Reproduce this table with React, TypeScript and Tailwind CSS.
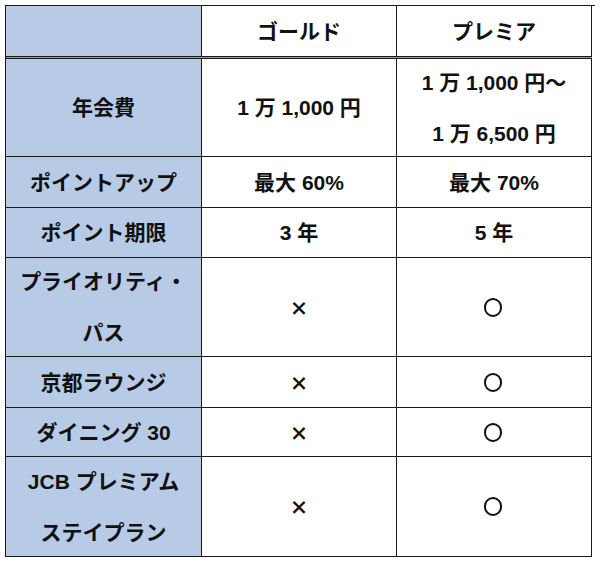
const font = { fontFamily: '"Liberation Sans", "Noto Sans CJK JP", sans-serif' }
const cjk = { fontFamily: '"Noto Sans CJK JP", sans-serif' }

type Row = { label: string[]; gold: string[]; premia: string[]; h: string; mark?: boolean }

const rows: Row[] = [
  { label: ['年会費'], gold: ['1 万 1,000 円'], premia: ['1 万 1,000 円～', '1 万 6,500 円'], h: 'h-[99px]' },
  { label: ['ポイントアップ'], gold: ['最大 60%'], premia: ['最大 70%'], h: 'h-[51px]' },
  { label: ['ポイント期限'], gold: ['3 年'], premia: ['5 年'], h: 'h-[50px]' },
  { label: ['プライオリティ・', 'パス'], gold: ['×'], premia: ['○'], h: 'h-[99px]', mark: true },
  { label: ['京都ラウンジ'], gold: ['×'], premia: ['○'], h: 'h-[51px]', mark: true },
  { label: ['ダイニング 30'], gold: ['×'], premia: ['○'], h: 'h-[49px]', mark: true },
  { label: ['JCB プレミアム', 'ステイプラン'], gold: ['×'], premia: ['○'], h: 'h-[100px]', mark: true },
]

function Cell({ lines, h, blue, top }: { lines: string[]; h: string; blue?: boolean; top?: boolean }) {
  return (
    <div
      className={`${h} flex flex-col items-center justify-center border-r border-b border-[#1a1a1a] text-center leading-[51px] ${
        blue ? 'bg-[#b7cbe7]' : 'bg-white'
      } ${top ? 'border-t' : ''}`}
    >
      {lines.map((l, i) => (
        <span key={i} className="whitespace-pre">{l}</span>
      ))}
    </div>
  )
}

function Mark({ h, circle }: { h: string; circle?: boolean }) {
  return (
    <div className={`${h} flex items-center justify-center border-r border-b border-[#1a1a1a] bg-white`}>
      {circle ? (
        <span aria-label="○" className="ml-[-3px] block h-[19px] w-[18px] rounded-full border-[2.5px] border-[#111]" />
      ) : (
        <span className="text-[19px] font-black leading-none" style={cjk}>×</span>
      )}
    </div>
  )
}

export default function App() {
  return (
    <div className="w-[600px] h-[564px] bg-white p-[5px] text-[21px] font-bold text-[#111]" style={font}>
      <div className="grid grid-cols-[196px_195px_195px] border-l border-t border-[#1a1a1a]">
        <Cell lines={['']} h="h-[51px]" blue />
        <Cell lines={['ゴールド']} h="h-[51px]" />
        <Cell lines={['プレミア']} h="h-[51px]" />
        <div className="col-span-3 h-px bg-[#9a9a9a]" />
        {rows.map((r, i) => (
          <div key={i} className="contents">
            <Cell lines={r.label} h={r.h} blue top={i === 0} />
            {r.mark ? (
              <>
                <Mark h={r.h} />
                <Mark h={r.h} circle />
              </>
            ) : (
              <>
                <Cell lines={r.gold} h={r.h} top={i === 0} />
                <Cell lines={r.premia} h={r.h} top={i === 0} />
              </>
            )}
          </div>
        ))}
      </div>
    </div>
  )
}
